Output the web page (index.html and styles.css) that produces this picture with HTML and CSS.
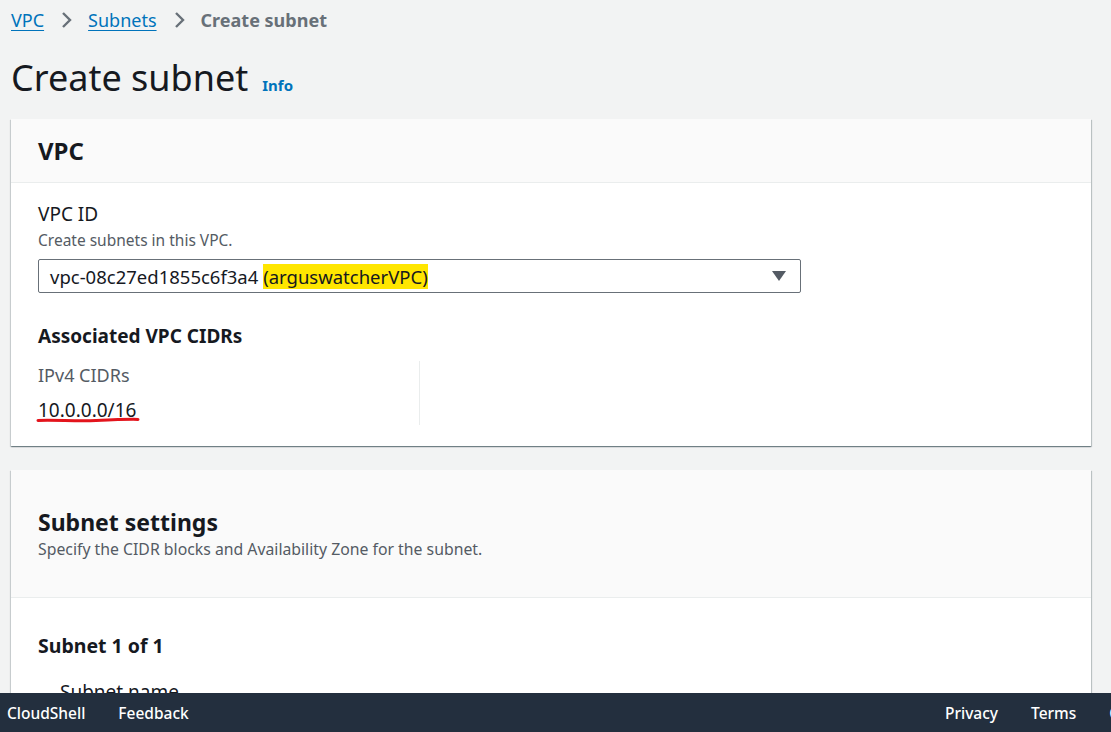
FILE: index.html
```html
<!DOCTYPE html>
<html lang="en">
<head>
<meta charset="utf-8">
<title>Create subnet</title>
<link rel="stylesheet" href="styles.css">
</head>
<body>
<main class="page">
  <nav class="crumbs">
    <a class="crumb-link" href="#">VPC</a>
    <svg class="chev" width="14" height="20" viewBox="0 0 14 20"><path d="M3 3 L10 10 L3 17" fill="none" stroke="#687078" stroke-width="2.4"/></svg>
    <a class="crumb-link" href="#">Subnets</a>
    <svg class="chev" width="14" height="20" viewBox="0 0 14 20"><path d="M3 3 L10 10 L3 17" fill="none" stroke="#687078" stroke-width="2.4"/></svg>
    <span class="crumb-current">Create subnet</span>
  </nav>

  <h1 class="title">Create subnet <a class="info" href="#">Info</a></h1>

  <section class="card">
    <header class="card-head card-head-sm">
      <h2 class="card-title">VPC</h2>
    </header>
    <div class="card-body vpc-body">
      <div class="label">VPC ID</div>
      <div class="desc">Create subnets in this VPC.</div>
      <div class="select">
        <span class="select-text">vpc-08c27ed1855c6f3a4 <mark class="hl">(arguswatcherVPC)</mark></span>
        <svg class="caret" width="14" height="10" viewBox="0 0 14 10"><path d="M0 0 H14 L7 10 Z" fill="#545b64"/></svg>
      </div>
      <h3 class="sub-title">Associated VPC CIDRs</h3>
      <div class="cidr-col">
        <div class="kv-key">IPv4 CIDRs</div>
        <div class="kv-val">10.0.0.0/16
          <svg class="scribble" width="106" height="8" viewBox="0 0 106 8"><path d="M2 5.5 C 20 4.8, 40 6.5, 60 5.6 C 80 4.6, 95 4.2, 102 4.4" fill="none" stroke="#e3141c" stroke-width="3" stroke-linecap="round"/></svg>
        </div>
      </div>
    </div>
  </section>

  <section class="card">
    <header class="card-head card-head-lg">
      <h2 class="card-title card-title-lg">Subnet settings</h2>
      <div class="desc head-desc">Specify the CIDR blocks and Availability Zone for the subnet.</div>
    </header>
    <div class="card-body subnet-body">
      <h3 class="sub-title">Subnet 1 of 1</h3>
      <div class="label indent">Subnet name</div>
    </div>
  </section>
</main>

<footer class="footer">
  <div class="foot-left">
    <a href="#" class="foot-link">CloudShell</a>
    <a href="#" class="foot-link">Feedback</a>
  </div>
  <div class="foot-right">
    <a href="#" class="foot-link">Privacy</a>
    <a href="#" class="foot-link">Terms</a>
    <a href="#" class="foot-link">Cookie preferences</a>
  </div>
</footer>
</body>
</html>
```

FILE: styles.css
```css
html, body {
  margin: 0;
  padding: 0;
  height: 732px;
  overflow: hidden;
}
body {
  background: #f2f3f3;
  font-family: "Noto Sans", "Open Sans", "Liberation Sans", sans-serif;
  color: #16191f;
}
.page {
  padding: 0 20px 0 11px;
}
.crumbs {
  display: flex;
  align-items: center;
  height: 40px;
  font-size: 18px;
}
.crumb-link {
  color: #0073bb;
  text-decoration: underline;
  text-underline-offset: 3px;
}
.chev {
  margin: 0 14px 0 16px;
}
.crumb-current {
  color: #687078;
  font-weight: 700;
}
.title {
  margin: 16px 0 0 0;
  height: 44px;
  font-size: 36px;
  line-height: 44px;
  font-weight: 400;
  display: flex;
  align-items: baseline;
  gap: 14px;
}
.info {
  font-size: 15px;
  line-height: 1;
  font-weight: 700;
  color: #0073bb;
  text-decoration: none;
}
.card {
  margin-top: 19px;
  background: #fff;
  box-shadow: 0 1px 1px 0 rgba(0, 28, 36, 0.35), 1px 1px 1px 0 rgba(0, 28, 36, 0.18), -1px 1px 1px 0 rgba(0, 28, 36, 0.12);
  width: 1080px;
}
.card + .card {
  margin-top: 24px;
}
.card-head {
  background: #fafafa;
  border-bottom: 1px solid #eaeded;
  padding: 0 27px;
}
.card-head-sm {
  height: 63px;
  display: flex;
  align-items: center;
}
.card-head-lg {
  height: 127px;
  display: flex;
  flex-direction: column;
  justify-content: center;
}
.card-title {
  margin: 0;
  font-size: 24px;
  line-height: 28px;
  font-weight: 700;
}
.card-title-lg {
  font-size: 23px;
}
.card-body {
  padding: 19px 27px 21px;
}
.label {
  font-size: 19px;
  line-height: 24px;
}
.desc {
  font-size: 15.5px;
  line-height: 20px;
  color: #545b64;
  margin-top: 4px;
}
.head-desc {
  margin-top: 3px;
  font-size: 15.8px;
}
.select {
  margin-top: 9px;
  width: 763px;
  height: 34px;
  box-sizing: border-box;
  border: 1px solid #687078;
  border-radius: 2px;
  display: flex;
  align-items: center;
  justify-content: space-between;
  padding: 0 14px 0 11px;
}
.select-text {
  font-size: 18.5px;
}
.hl {
  background: #ffe600;
  color: #16191f;
}
.sub-title {
  margin: 31px 0 0;
  font-size: 19px;
  line-height: 24px;
  font-weight: 700;
}
.cidr-col {
  margin-top: 13px;
  width: 381px;
  border-right: 1px solid #eaeded;
  padding: 2px 0 3px;
}
.kv-key {
  font-size: 18px;
  line-height: 24px;
  color: #545b64;
}
.kv-val {
  position: relative;
  margin-top: 11px;
  font-size: 19px;
  line-height: 24px;
}
.scribble {
  position: absolute;
  left: -2px;
  top: 17px;
}
.subnet-body {
  padding-top: 35px;
}
.subnet-body .sub-title {
  margin-top: 0;
  font-size: 19.5px;
  line-height: 26px;
}
.indent {
  margin: 21px 0 0 22px;
}
.footer {
  position: fixed;
  left: 0;
  right: 0;
  bottom: 0;
  height: 39px;
  background: #232f3e;
  display: flex;
  align-items: center;
  white-space: nowrap;
  overflow: hidden;
}
.foot-left, .foot-right {
  display: flex;
  gap: 33px;
}
.foot-left {
  padding-left: 7px;
}
.foot-right {
  margin-left: auto;
  width: 166px;
  flex-shrink: 0;
}
.foot-link {
  color: #fff;
  text-decoration: none;
  font-size: 15.5px;
  font-weight: 500;
}
```
